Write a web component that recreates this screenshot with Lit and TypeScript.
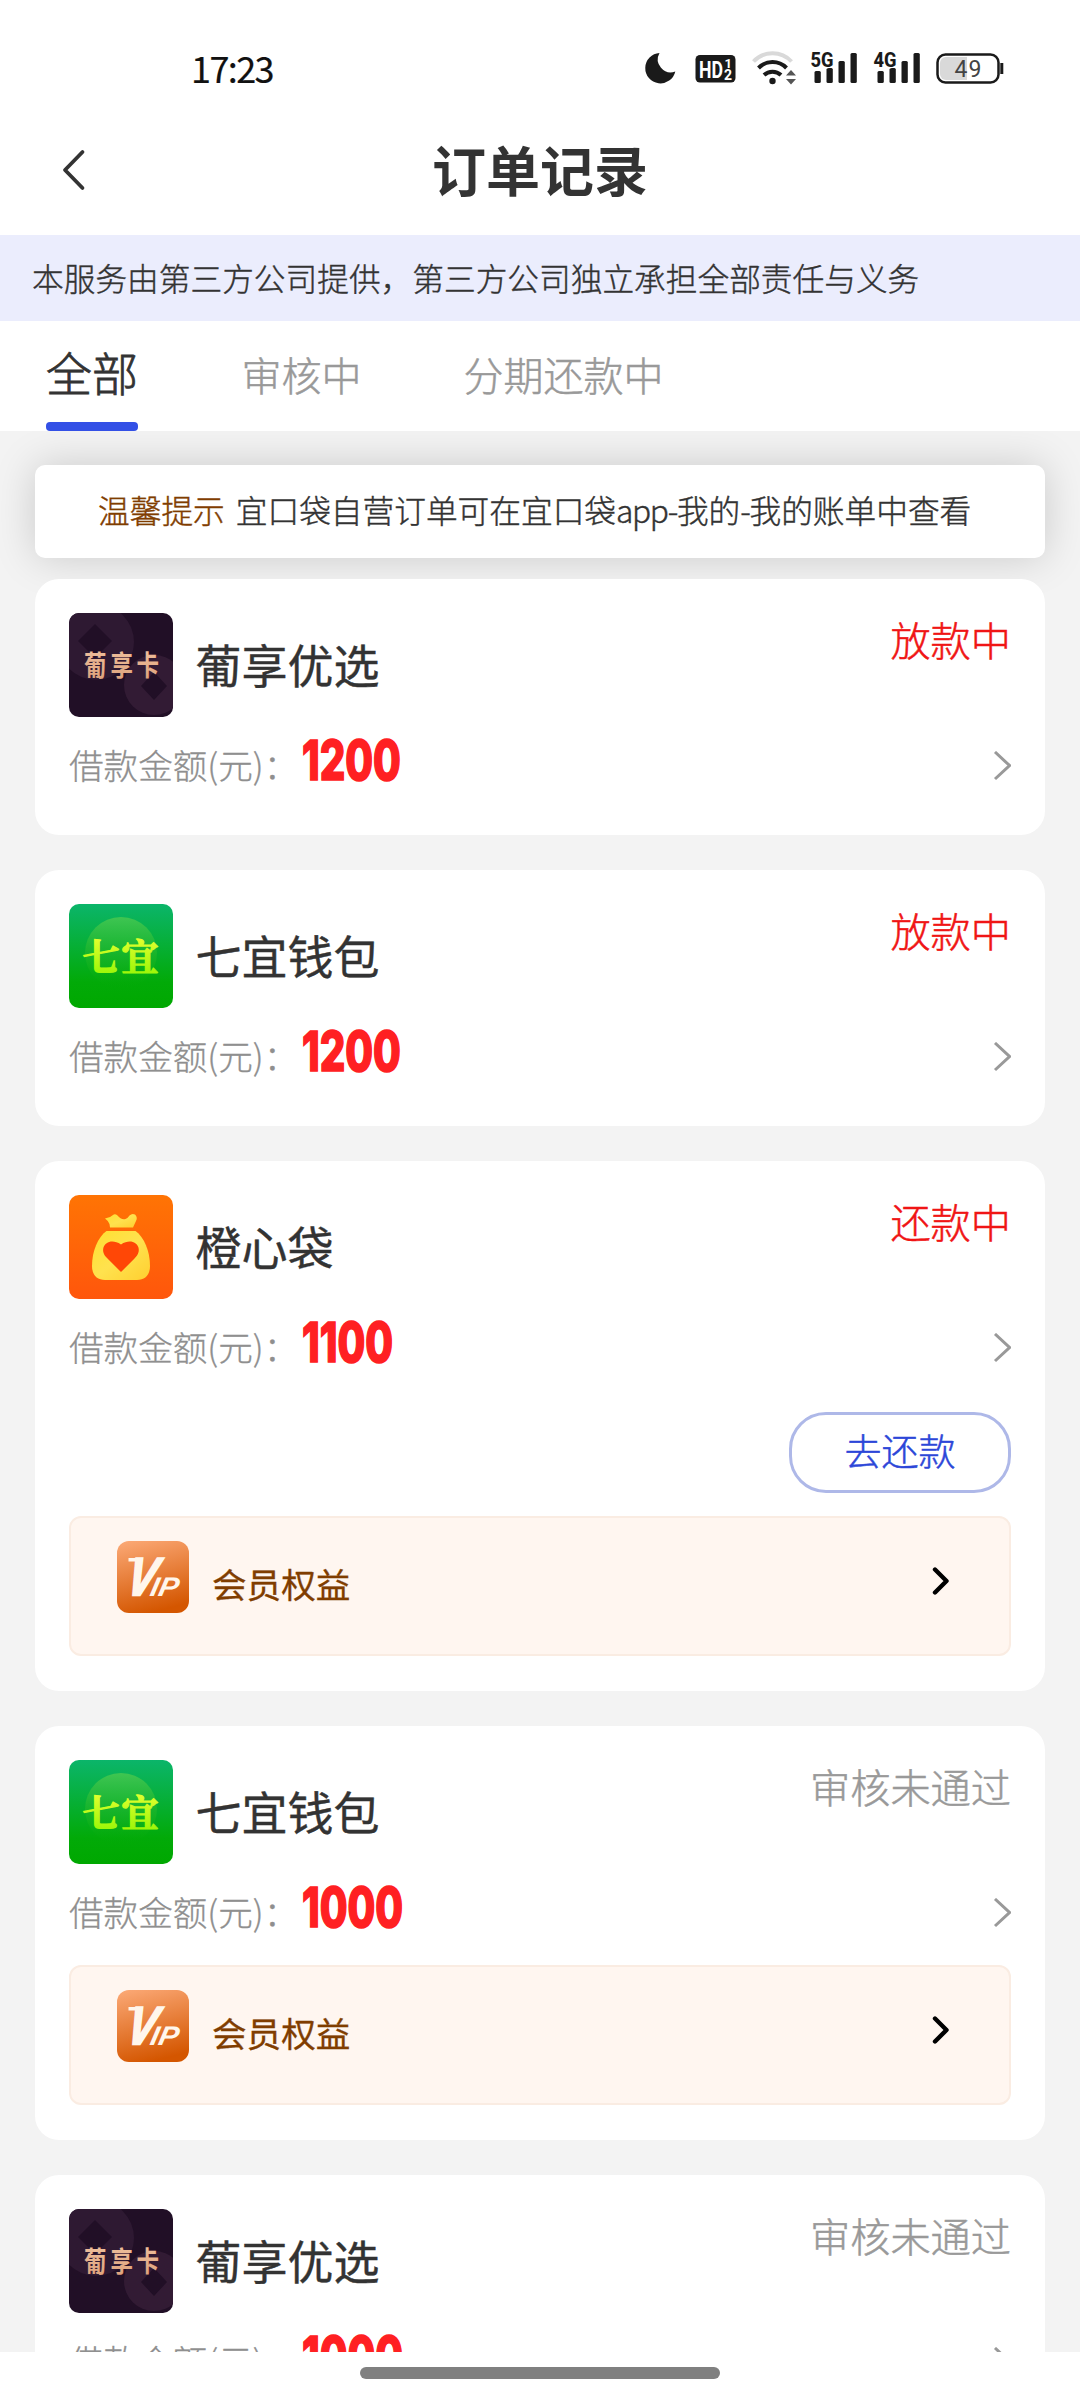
import { LitElement, html, css, svg, nothing } from "lit";
import { customElement, property } from "lit/decorators.js";

type Brand = "grape" | "seven" | "bag";

interface Order {
  brand: Brand;
  name: string;
  status: string;
  muted?: boolean;
  amount: string;
  repay?: boolean;
  vip?: boolean;
}

const ORDERS: Order[] = [
  { brand: "grape", name: "葡享优选", status: "放款中", amount: "1200" },
  { brand: "seven", name: "七宜钱包", status: "放款中", amount: "1200" },
  { brand: "bag", name: "橙心袋", status: "还款中", amount: "1100", repay: true, vip: true },
  { brand: "seven", name: "七宜钱包", status: "审核未通过", muted: true, amount: "1000", vip: true },
  { brand: "grape", name: "葡享优选", status: "审核未通过", muted: true, amount: "1000", vip: true },
];

const signal = (label: string) => html`
  <svg class="signal" width="48" height="36" viewBox="0 0 48 36">
    <g fill="#1a1a1a">
      <rect x="4.5" y="21" width="6.3" height="12" rx="1.5" />
      <rect x="16.5" y="18" width="6.3" height="15" rx="1.5" />
      <rect x="28.5" y="11" width="6.3" height="22" rx="1.5" />
      <rect x="40.5" y="3" width="6.3" height="30" rx="1.5" />
    </g>
    <text x="0.5" y="16.5" font-size="21" font-weight="800" textLength="23" lengthAdjust="spacingAndGlyphs"
      fill="#1a1a1a" stroke="#fff" stroke-width="2.5" paint-order="stroke">${label}</text>
  </svg>`;

@customElement("status-bar")
export class StatusBar extends LitElement {
  static styles = css`
    :host {
      display: flex;
      height: 100px;
      box-sizing: border-box;
      padding: 50px 76px 0 191px;
      justify-content: space-between;
      align-items: flex-start;
    }
    svg { display: block; overflow: visible; font-family: Roboto, "Liberation Sans", sans-serif; }
    .time {
      margin-top: -2.5px;
      font: 400 36px/38px "Noto Sans CJK SC", sans-serif;
      letter-spacing: -1.6px;
      color: #111;
      -webkit-text-stroke: 0.2px #111;
    }
    .icons { display: flex; height: 36px; }
    .moon { margin-right: 19px; }
    .hd { margin-right: 17px; }
    .wifi { margin-right: 13px; }
    .signal { margin-right: 15px; }
  `;

  render() {
    return html`
      <span class="time">17:23</span>
      <div class="icons">
        <svg class="moon" width="31" height="36" viewBox="0 0 31 36">
          <path d="M14.500 3A15.2 15.2 0 1 0 30.3 21.500A13 13 0 0 1 14.500 3Z" fill="#1a1a1a" />
        </svg>
        <svg class="hd" width="40" height="36" viewBox="0 0 40 36">
          <rect x="0.500" y="5" width="40" height="27.5" rx="4.5" fill="#1a1a1a" />
          <g fill="#fff" font-weight="700">
            <text x="4" y="27.500" font-size="23" textLength="24" lengthAdjust="spacingAndGlyphs">HD</text>
            <text x="29.500" y="18" font-size="13">1</text>
            <text x="29" y="30" font-size="14">2</text>
          </g>
        </svg>
        <svg class="wifi" width="45" height="36" viewBox="0 0 45 36">
          <g fill="none" stroke-width="4">
            <path d="M1.5 11.5A26 26 0 0 1 39.5 11.5" stroke="#d9d9d9" />
            <path d="M6.5 18A19.5 19.5 0 0 1 34.5 18" stroke="#1a1a1a" />
            <path d="M12 25A12.5 12.5 0 0 1 29 25" stroke="#1a1a1a" />
          </g>
          <circle cx="20.5" cy="31" r="3.2" fill="#1a1a1a" />
          <path d="M34 25.5L39 20L44 25.5ZM34 29H44L39 34.5Z" fill="#555" />
        </svg>
        ${signal("5G")}${signal("4G")}
        <svg width="68" height="36" viewBox="0 0 68 36">
          <rect x="1.5" y="4.5" width="61" height="28" rx="8" fill="#fff" stroke="#1a1a1a" stroke-width="2.5" />
          <path d="M10 7H31V30H10A6 6 0 0 1 4 24V13A6 6 0 0 1 10 7Z" fill="#d9d9d9" />
          <path d="M65.8 13V24" stroke="#1a1a1a" stroke-width="3" />
          <text x="18.5" y="26.5" font-size="23" textLength="27" fill="#444">49</text>
        </svg>
      </div>`;
  }
}

@customElement("brand-logo")
export class BrandLogo extends LitElement {
  @property() brand: Brand = "grape";

  static styles = css`
    :host { display: block; width: 104px; height: 104px; flex: none; }
    svg { display: block; border-radius: 10px; font-family: "Noto Sans CJK SC", sans-serif; }
  `;

  private art() {
    if (this.brand === "grape") {
      return svg`
        <linearGradient id="g" x1="0" y1="0" x2="0" y2="1">
          <stop offset="0" stop-color="#f2c6a4" /><stop offset="1" stop-color="#dc9f78" />
        </linearGradient>
        <rect width="104" height="104" fill="#210f26" />
        <circle cx="27" cy="29" r="38" fill="#2e1932" />
        <path d="M26 11L43 28L26 45L9 28Z" fill="#210f26" />
        <circle cx="85" cy="72" r="30" fill="#321b34" />
        <path d="M85 59L98 73L85 87L72 73Z" fill="#210f26" />
        <g fill="url(#g)" font-size="22.5" font-weight="700" transform="translate(0 62.5) scale(1 1.28)">
          <text x="15" y="0">葡</text><text x="41.5" y="0">享</text><text x="67.5" y="0">卡</text>
        </g>`;
    }
    if (this.brand === "seven") {
      return svg`
        <linearGradient id="b" x1="0" y1="0" x2="0" y2="1">
          <stop offset="0" stop-color="#0bb56a" /><stop offset="0.75" stop-color="#02aa08" />
          <stop offset="1" stop-color="#00a800" />
        </linearGradient>
        <linearGradient id="c" x1="0" y1="0" x2="0" y2="1">
          <stop offset="0" stop-color="#3fc552" /><stop offset="0.7" stop-color="#1bb41c" stop-opacity="0.4" />
          <stop offset="1" stop-color="#02aa08" stop-opacity="0" />
        </linearGradient>
        <linearGradient id="t" x1="0" y1="0" x2="0" y2="1">
          <stop offset="0.2" stop-color="#e2ff2e" /><stop offset="1" stop-color="#8cf400" />
        </linearGradient>
        <rect width="104" height="104" fill="url(#b)" />
        <circle cx="52" cy="49" r="36" fill="url(#c)" />
        <g fill="url(#t)" stroke="url(#t)" stroke-width="1.2" font-size="37" font-weight="700" font-family="Noto Serif CJK SC, Noto Sans CJK SC, sans-serif">
          <text x="13.5" y="66.5">七</text><text x="52.5" y="66.5">宜</text>
        </g>`;
    }
    return svg`
      <linearGradient id="o" x1="0" y1="0" x2="0" y2="1">
        <stop offset="0" stop-color="#ff7404" /><stop offset="1" stop-color="#ff560c" />
      </linearGradient>
      <linearGradient id="y" x1="0" y1="0" x2="1" y2="1">
        <stop offset="0" stop-color="#ffdf30" /><stop offset="0.5" stop-color="#ffe24e" />
        <stop offset="1" stop-color="#ffcf30" />
      </linearGradient>
      <rect width="104" height="104" fill="url(#o)" />
      <path d="M41 32.5L40.5 29Q39 25.5 36 23.5Q41 23 44 20Q46 18.5 48.5 20.5Q52 25 56.5 24Q58.5 23.5 60.5 20.5Q63 18 66 19.5Q69 22.5 67 26L64 32.5Z" fill="url(#y)" />
      <path d="M37.5 36H66.5C75 42 81 56 81 71C81 80 76 85 68 85H36C28 85 23 80 23 71C23 56 29 42 37.5 36Z" fill="url(#y)" />
      <path d="M52 77L38.500 63.500C28 54.500 38 40.500 52 49.500C66 40.500 76 54.500 65.500 63.500Z" fill="#ff4706" />`;
  }

  render() {
    return html`<svg width="104" height="104" viewBox="0 0 104 104">${this.art()}</svg>`;
  }
}

@customElement("order-card")
export class OrderCard extends LitElement {
  @property({ attribute: false }) order!: Order;

  static styles = css`
    :host {
      display: block;
      background: #fff;
      border-radius: 24px;
      padding: 34px 34px 1px;
      font-family: "Noto Sans CJK SC", sans-serif;
    }
    svg { display: block; }
    .head { display: flex; align-items: flex-start; height: 104px; }
    .name {
      flex: 1;
      margin-left: 22.5px;
      font-size: 46px;
      font-weight: 400;
      line-height: 100px;
      color: #333;
      -webkit-text-stroke: 0.4px #333;
    }
    .status { font-size: 40.2px; line-height: 51px; font-weight: 300; color: #f01515; -webkit-text-stroke: 0.5px; }
    .status.muted { color: #999; }
    .row { display: flex; align-items: center; height: 97px; }
    .label { width: 232.5px; padding-bottom: 4px; font-size: 34.6px; font-weight: 300; color: #8f8f8f; white-space: nowrap; -webkit-text-stroke: 0.3px; }
    .amount {
      flex: 1;
      padding-bottom: 11px;
      font: 800 55px/60px Inter, "Liberation Sans", sans-serif;
      color: #ff2022;
      transform: scaleX(0.73);
      transform-origin: left center;
      -webkit-text-stroke: 1.6px #ff2022;
    }
    .foot { height: 20px; }
    .actions { display: flex; justify-content: flex-end; margin-top: 16px; }
    .repay {
      box-sizing: border-box;
      width: 222px;
      height: 81px;
      border: 3px solid #aeb8e8;
      border-radius: 37px;
      text-align: center;
      font-size: 37px;
      font-weight: 300;
      line-height: 70px;
      color: #2c46d8;
      -webkit-text-stroke: 0.5px;
    }
    .vip {
      box-sizing: border-box;
      display: flex;
      align-items: flex-start;
      height: 140px;
      margin: 4px 0 0;
      padding: 23px 59px 0 46px;
      border: 2px solid #faece2;
      border-radius: 12px;
      background: #fff6f0;
    }
    .actions + .vip { margin-top: 23px; }
    .viplabel { flex: 1; margin: 17px 0 0 23px; font-size: 34.6px; line-height: 50px; color: #803d00; -webkit-text-stroke: 0.3px; }
    .vip + .foot { height: 34px; }
    .go { margin-top: 25px; }
  `;

  render() {
    const o = this.order;
    return html`
      <div class="head">
        <brand-logo .brand=${o.brand}></brand-logo>
        <div class="name">${o.name}</div>
        <div class="status ${o.muted ? "muted" : ""}">${o.status}</div>
      </div>
      <div class="row">
        <span class="label">借款金额(元)：</span>
        <span class="amount">${o.amount}</span>
        <svg width="18" height="30" viewBox="0 0 18 30">
          <path d="M2 1L16.5 14.5L2 28" fill="none" stroke="#999" stroke-width="3" />
        </svg>
      </div>
      ${o.repay ? html`<div class="actions"><div class="repay">去还款</div></div>` : nothing}
      ${o.vip
        ? html`<div class="vip">
            <svg width="72" height="72" viewBox="0 0 72 72">
              <linearGradient id="v" x1="0.2" y1="0" x2="0.45" y2="1">
                <stop offset="0" stop-color="#faa672" /><stop offset="1" stop-color="#d45600" />
              </linearGradient>
              <rect width="72" height="72" rx="12" fill="url(#v)" />
              <rect x="11.5" y="17" width="8" height="3.5" fill="#fff6ec" />
              <g fill="#fff6ec" font-family="Liberation Sans, sans-serif" font-weight="700" font-style="italic">
                <text transform="translate(8 54) skewX(-12)" font-size="53" textLength="28" lengthAdjust="spacingAndGlyphs" stroke="#fff6ec" stroke-width="2.4">V</text>
                <text transform="translate(32 55) skewX(-12)" font-size="27" textLength="28" lengthAdjust="spacingAndGlyphs">IP</text>
              </g>
            </svg>
            <span class="viplabel">会员权益</span>
            <svg class="go" width="18" height="30" viewBox="0 0 18 30">
              <path d="M3 3.5L14.5 15L3 26.5" fill="none" stroke="#000" stroke-width="4.4" stroke-linecap="round" stroke-linejoin="round" />
            </svg>
          </div>`
        : nothing}
      <div class="foot"></div>`;
  }
}

@customElement("app-root")
export class AppRoot extends LitElement {
  static styles = css`
    :host {
      display: flex;
      flex-direction: column;
      width: 1080px;
      height: 2400px;
      overflow: hidden;
      background: #fff;
      font-family: "Noto Sans CJK SC", sans-serif;
      color: #333;
    }
    .nav {
      display: grid;
      grid-template-columns: 120px 1fr 120px;
      align-items: center;
      height: 135px;
      flex: none;
    }
    .back { margin: 5px 0 0 60px; display: block; }
    .title { text-align: center; font-size: 54px; font-weight: 700; line-height: 80px; padding-top: 2px; }
    .notice {
      flex: none;
      height: 86px;
      line-height: 84px;
      padding-left: 32px;
      box-sizing: border-box;
      background: #ebedfd;
      font-size: 31.7px;
      font-weight: 300;
      -webkit-text-stroke: 0.4px;
      white-space: nowrap;
    }
    .tabs { flex: none; display: flex; height: 110px; padding-left: 46px; color: #999; font-size: 40px; font-weight: 300; line-height: 106px; -webkit-text-stroke: 0.5px; }
    .tab { margin-right: 102px; }
    .tab.on { position: relative; font-size: 46px; color: #333; line-height: 101px; margin-right: 103.5px; -webkit-text-stroke: 0.8px; }
    .tab.on::after { content: ""; position: absolute; left: 0; right: 0; bottom: 0; height: 9px; border-radius: 4px; background: #3350e6; }
    .list { flex: 1; min-height: 0; overflow: hidden; background: #f3f3f3; padding: 34px 35px 0; }
    .tip {
      height: 93px;
      line-height: 89px;
      border-radius: 10px;
      background: #fff;
      box-shadow: 0 0 42px rgba(0, 0, 0, 0.17);
      padding-left: 63px;
      margin-bottom: 21px;
      font-size: 31.7px;
      font-weight: 300;
      -webkit-text-stroke: 0.4px;
      white-space: nowrap;
    }
    .latin { letter-spacing: -1.4px; }
    .warm { color: #803d00; margin-right: 11px; }
    .cards { display: flex; flex-direction: column; gap: 35px; }
    .home { flex: none; height: 48px; display: flex; justify-content: center; padding-top: 15px; box-sizing: border-box; }
    .pill { width: 360px; height: 12px; border-radius: 6px; background: #808080; }
  `;

  render() {
    return html`
      <status-bar></status-bar>
      <div class="nav">
        <svg class="back" width="26" height="44" viewBox="0 0 26 44">
          <path d="M22.5 4L5 22L22.5 40" fill="none" stroke="#333" stroke-width="3.8" stroke-linecap="round" stroke-linejoin="round" />
        </svg>
        <div class="title">订单记录</div>
      </div>
      <div class="notice">本服务由第三方公司提供，第三方公司独立承担全部责任与义务</div>
      <div class="tabs">
        <div class="tab on">全部</div>
        <div class="tab">审核中</div>
        <div class="tab">分期还款中</div>
      </div>
      <div class="list">
        <div class="tip"><span class="warm">温馨提示</span>宜口袋自营订单可在宜口袋<span class="latin">app-</span>我的<span class="latin">-</span>我的账单中查看</div>
        <div class="cards">${ORDERS.map((o) => html`<order-card .order=${o}></order-card>`)}</div>
      </div>
      <div class="home"><div class="pill"></div></div>`;
  }
}
